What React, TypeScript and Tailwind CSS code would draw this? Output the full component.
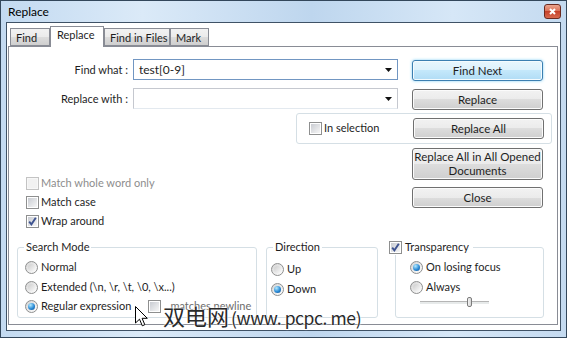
const ui = "font-['Segoe_UI','Lato',sans-serif] text-[11px] text-[#1e1e1e]";

function CheckBox({ checked = false, disabled = false }: { checked?: boolean; disabled?: boolean }) {
  return (
    <span
      className={`relative flex h-[13px] w-[13px] shrink-0 items-center justify-center border ${
        disabled ? "border-[#c3c3c3] bg-[#f7f7f7]" : "border-[#8e8f8f] bg-white"
      }`}
    >
      <span
        className={`h-[9px] w-[9px] ${
          disabled ? "bg-[#f1f1f1]" : "bg-[linear-gradient(135deg,#c9ccd2,#f6f6f6)]"
        }`}
      />
      {checked && (
        <svg className="absolute inset-0" width="11" height="11" viewBox="0 0 11 11">
          <path d="M2.2 5.6 L4.4 8.3 L8.8 1.8" fill="none" stroke="#3e5390" strokeWidth="1.9" />
        </svg>
      )}
    </span>
  );
}

function Radio({ checked = false }: { checked?: boolean }) {
  return (
    <span className="flex h-[13px] w-[13px] shrink-0 items-center justify-center rounded-full border border-[#8e8f8f] bg-[linear-gradient(135deg,#d4d4d4,#ffffff)]">
      <span
        className={`h-[7px] w-[7px] rounded-full ${
          checked
            ? "bg-[radial-gradient(circle_at_35%_30%,#b5ebff,#2b8bd6_55%,#0c4a8a)]"
            : "bg-[linear-gradient(135deg,#cdcdcd,#f8f8f8)]"
        }`}
      />
    </span>
  );
}

function Btn({
  children,
  primary = false,
  className = "",
}: {
  children: React.ReactNode;
  primary?: boolean;
  className?: string;
}) {
  return (
    <div
      className={`flex w-[131px] shrink-0 items-center justify-center whitespace-nowrap rounded-[3px] border text-center text-[11.5px] leading-[14px] ${
        primary
          ? "border-[#3c7fb1] bg-[linear-gradient(#e8f6fd,#dcf1fc_50%,#c4e8fb_50%,#b0dcf5)] shadow-[0_0_3px_#7fd0f7,inset_0_0_0_1px_#f4fbfe]"
          : "border-[#707070] bg-[linear-gradient(#f2f2f2,#ebebeb_50%,#dddddd_50%,#cfcfcf)] shadow-[inset_0_0_0_1px_#fbfbfb]"
      } ${className}`}
    >
      {children}
    </div>
  );
}

function Combo({ value = "", focused = false }: { value?: string; focused?: boolean }) {
  return (
    <div
      className={`flex h-[21px] w-[265px] shrink-0 items-center border bg-white ${
        focused ? "border-[#7196c2]" : "border-[#c5c8cf] border-b-[#e3e9ef]"
      }`}
    >
      <span className="flex-1 pl-[5px] text-[12px] leading-[19px]">{value}</span>
      <svg width="7" height="4" viewBox="0 0 7 4" className="mr-[5px]">
        <path d="M0 0H7L3.5 4Z" fill="#111" />
      </svg>
    </div>
  );
}

function Tab({ label, active = false, w }: { label: string; active?: boolean; w: string }) {
  return (
    <div
      className={`flex shrink-0 items-center whitespace-nowrap border border-[#898c95] text-[11px] ${w} ${
        active
          ? "relative z-10 -mb-[1px] h-[21px] border-b-0 bg-white pl-[6px] pb-[3px] text-[11.5px]"
          : "h-[18px] bg-[linear-gradient(#f2f2f2,#ebebeb_50%,#dddddd_50%,#cfcfcf)] pl-[5px] pt-[2px]"
      }`}
    >
      {label}
    </div>
  );
}

export default function App() {
  return (
    <div className={`${ui} relative h-[338px] w-[567px] overflow-hidden border border-[#33475b] bg-[linear-gradient(90deg,#c3daf1,#dbeaf8_25%,#bed6ee_55%,#d6e7f7_80%,#c4daf0)]`}>
      {/* title bar */}
      <div className="flex h-[21px] items-center justify-between pl-[7px] pr-[5px]">
        <span className="text-[12px] text-black">Replace</span>
        <div className="flex h-[15px] w-[17px] items-center justify-center rounded-[3px] border border-[#6b2a20] bg-[linear-gradient(#eba58f,#d96d52_50%,#c5412a_50%,#d8694e)]">
          <svg width="7" height="7" viewBox="0 0 7 7">
            <path d="M1 1L6 6M6 1L1 6" stroke="white" strokeWidth="2" />
          </svg>
        </div>
      </div>

      {/* client */}
      <div className="mx-[5px] h-[309px] border border-[#3f5266] bg-white">
        <div className="flex h-[23px] items-end pl-[3px]">
          <Tab label="Find" w="w-[40px]" />
          <Tab label="Replace" active w="w-[54px]" />
          <Tab label="Find in Files" w="w-[66px]" />
          <Tab label="Mark" w="w-[39px]" />
        </div>

        <div className="ml-[1px] h-[279px] w-[550px] border border-[#898c95] bg-white">
          {/* Find what */}
          <div className="mt-[12px] flex items-start">
            <div className="w-[119px] whitespace-nowrap text-right leading-[21px]">Find what :</div>
            <div className="ml-[5px]">
              <Combo value="test[0-9]" focused />
            </div>
            <Btn primary className="ml-[14px] mt-[1px] h-[21px]">Find Next</Btn>
          </div>

          {/* Replace with */}
          <div className="mt-[7px] flex items-start">
            <div className="w-[119px] whitespace-nowrap text-right leading-[21px]">Replace with :</div>
            <div className="ml-[5px]">
              <Combo />
            </div>
            <Btn className="ml-[14px] mt-[1px] h-[21px]">Replace</Btn>
          </div>

          {/* In selection */}
          <div className="ml-[287px] mt-[3px] flex h-[31px] w-[256px] items-center rounded-[3px] border border-[#d5dfe5] pl-[12px] pr-[7px]">
            <CheckBox />
            <span className="ml-[2px]">In selection</span>
            <Btn className="ml-auto h-[21px]">Replace All</Btn>
          </div>

          {/* options + buttons */}
          <div className="mt-[4px] flex">
            <div className="flex flex-1 flex-col whitespace-nowrap pl-[17px] pt-[26px]">
              <div className="flex h-[19px] items-center text-[#8d8d8d]">
                <CheckBox disabled />
                <span className="ml-[2px]">Match whole word only</span>
              </div>
              <div className="flex h-[19px] items-center">
                <CheckBox />
                <span className="ml-[2px]">Match case</span>
              </div>
              <div className="flex h-[19px] items-center">
                <CheckBox checked />
                <span className="ml-[2px]">Wrap around</span>
              </div>
            </div>
            <div className="mr-[14px] flex flex-col">
              <Btn className="h-[32px]">
                Replace All in All Opened
                <br />
                Documents
              </Btn>
              <Btn className="mt-[7px] h-[21px]">Close</Btn>
            </div>
          </div>

          {/* groups */}
          <div className="mt-[8px] flex items-start whitespace-nowrap">
            <fieldset className="ml-[8px] h-[79px] w-[240px] min-w-0 rounded-[3px] border border-[#d5dfe5]">
              <legend className="ml-[6px] px-[2px] leading-[16px]">Search Mode</legend>
              <div className="pl-[7px] pt-[2px]">
                <div className="flex h-[20px] items-center">
                  <Radio />
                  <span className="ml-[3px]">Normal</span>
                </div>
                <div className="flex h-[20px] items-center">
                  <Radio />
                  <span className="ml-[3px]">Extended (\n, \r, \t, \0, \x...)</span>
                </div>
                <div className="flex h-[19px] items-center">
                  <Radio checked />
                  <span className="ml-[3px] w-[104px]">Regular expression</span>
                  <span className="ml-[3px]">
                    <CheckBox />
                  </span>
                  <span className="ml-[4px] text-[#6d6d6d]">. matches newline</span>
                </div>
              </div>
            </fieldset>

            <fieldset className="ml-[9px] h-[79px] w-[112px] min-w-0 rounded-[3px] border border-[#d5dfe5]">
              <legend className="ml-[6px] px-[2px] leading-[16px]">Direction</legend>
              <div className="pl-[4px] pt-[4px]">
                <div className="flex h-[20px] items-center">
                  <Radio />
                  <span className="ml-[3px]">Up</span>
                </div>
                <div className="flex h-[20px] items-center">
                  <Radio checked />
                  <span className="ml-[3px]">Down</span>
                </div>
              </div>
            </fieldset>

            <fieldset className="ml-[17px] h-[79px] w-[149px] min-w-0 rounded-[3px] border border-[#d5dfe5]">
              <legend className="-ml-[7px] flex items-center pr-[4px] leading-[16px]">
                <CheckBox checked />
                <span className="ml-[3px]">Transparency</span>
              </legend>
              <div className="pl-[14px] pt-[2px]">
                <div className="flex h-[20px] items-center">
                  <Radio checked />
                  <span className="ml-[3px]">On losing focus</span>
                </div>
                <div className="flex h-[20px] items-center">
                  <Radio />
                  <span className="ml-[3px]">Always</span>
                </div>
                <div className="relative ml-[10px] mt-[4px] h-[3px] w-[69px] border-t border-[#b5b5b5] border-b-white bg-[#e7eaea]">
                  <span className="absolute -top-[5px] left-[47px] h-[10px] w-[5px] rounded-[2px] border border-[#7b7b7b] bg-[linear-gradient(90deg,#f3f3f3,#d6d6d6)]" />
                </div>
              </div>
            </fieldset>
          </div>
        </div>
      </div>

      {/* mouse cursor */}
      <svg className="absolute left-[134px] top-[305px]" width="13" height="21" viewBox="0 0 13 21">
        <path d="M0.5 0.5V17L4.5 13.2L7.3 19.8L9.8 18.7L7.1 12.3H12.3Z" fill="white" stroke="black" strokeWidth="1" />
      </svg>

      {/* watermark */}
      <div className="absolute left-[162px] top-[300px] flex items-baseline whitespace-nowrap font-['Noto_Sans_CJK_SC',sans-serif] leading-[28px] text-[#2a2a2a] [text-shadow:0_0_2px_#fff,0_0_2px_#fff]">
        <span className="text-[22px]">双电网</span>
        <span className="ml-[2px] text-[17.5px] tracking-[-0.4px]">(www. pcpc. me)</span>
      </div>
    </div>
  );
}
